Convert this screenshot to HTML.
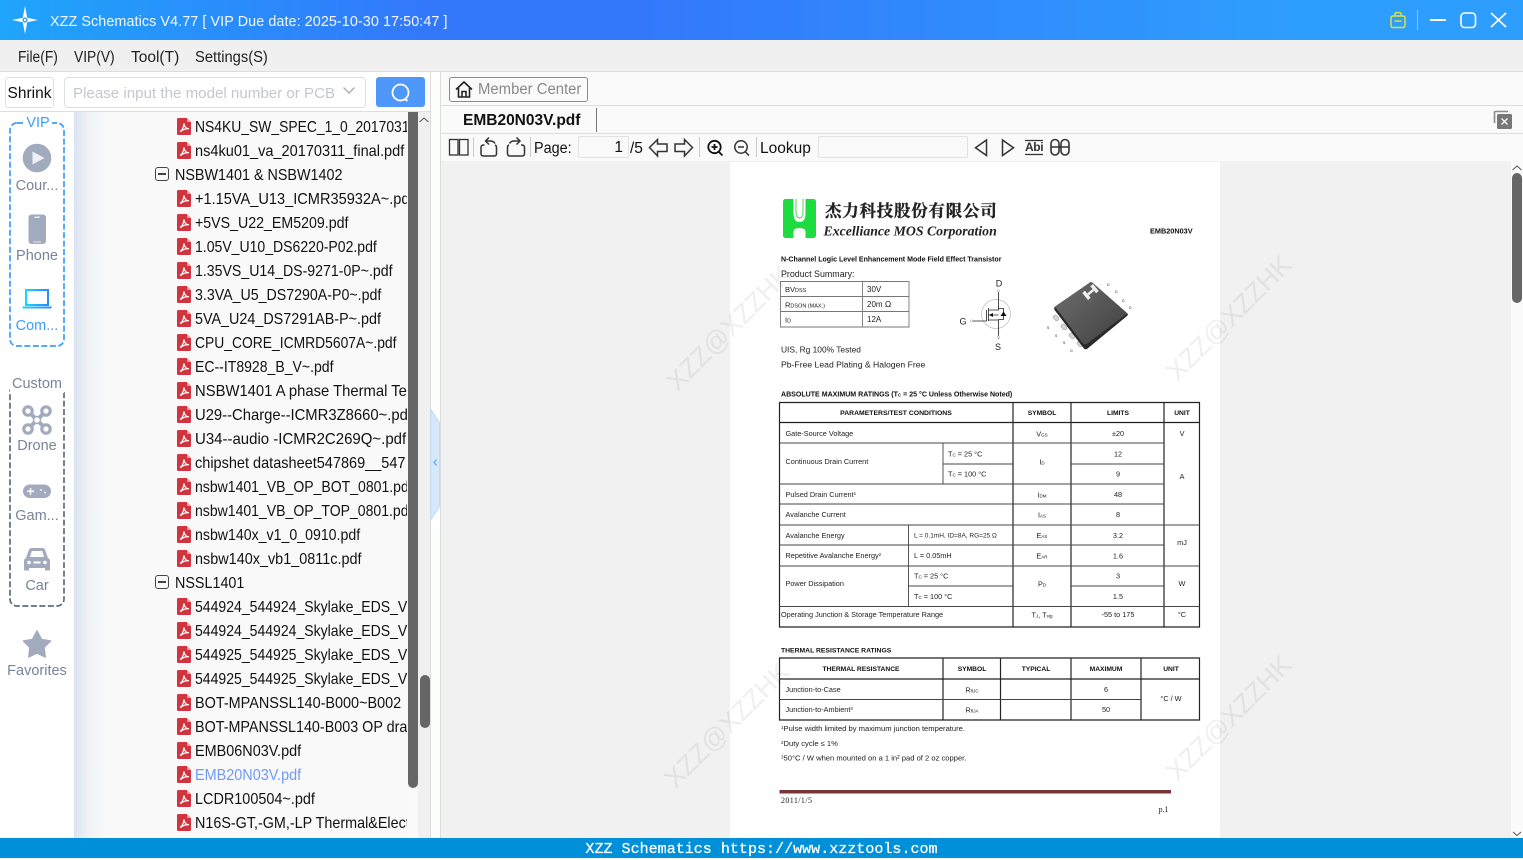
<!DOCTYPE html>
<html><head><meta charset="utf-8"><style>
html,body{margin:0;padding:0;width:1523px;height:858px;overflow:hidden;background:#fafafa;font-family:"Liberation Sans","Noto Sans CJK SC",sans-serif;color:#111}
.a{position:absolute;white-space:nowrap;transform-origin:0 50%}
svg{position:absolute;overflow:visible}
#tree{position:absolute;left:74px;top:112px;width:333px;height:726px;overflow:hidden;background:linear-gradient(90deg,#dbe4f3 0,#f0f2f6 14px,#f9f9f9 32px)}
#treebg{position:absolute;left:407px;top:112px;width:1px;height:726px;background:#f9f9f9}
.r{position:absolute;left:121px;height:24px;line-height:24px;margin-top:2px;font-size:15.6px;white-space:nowrap;color:#111;transform:scaleX(.92);transform-origin:0 50%}
.g{left:101px}
.i{position:absolute;left:103px;width:14px;height:17px}
.b{position:absolute;left:81px;width:12px;height:12px;border:1.3px solid #444;border-radius:3px}
.b:after{content:"";position:absolute;left:2px;right:2px;top:5.3px;height:1.3px;background:#444}
.sl{position:absolute;left:0;width:74px;text-align:center;font-size:14.5px;color:#79839a}
.pg text{font-family:"Liberation Sans",sans-serif;fill:#222;font-size:7.3px}
.pg .bd{font-weight:bold;fill:#111;font-size:6.7px}
.pg .m{text-anchor:middle}
.pg tspan.s{font-size:4.5px}
</style></head><body>

<!-- title bar -->
<div class="a" style="left:0;top:0;width:1523px;height:40px;background:linear-gradient(90deg,#1fa5fb 0,#3378fb 28%,#3378fb 42%,#2e9efe 85%,#2e9efe 100%)"></div>
<svg style="left:0;top:0" width="60" height="40" viewBox="0 0 60 40"><path d="M25 6 L27.2 17.8 L38 20 L27.2 22.2 L25 34 L22.8 22.2 L12 20 L22.8 17.8Z" fill="#fff"/><circle cx="25" cy="20" r="2.6" fill="#3a9cf8"/><circle cx="25" cy="20" r="1.2" fill="#fff"/></svg>
<div class="a" style="left:50px;top:12px;font-size:15px;line-height:19px;color:#f2f7ff;letter-spacing:.08px;transform:scaleX(.957)">XZZ Schematics V4.77 [ VIP Due date: 2025-10-30 17:50:47 ]</div>
<svg style="left:1380px;top:0" width="143" height="40" viewBox="1380 0 143 40" fill="none">
<rect x="1391" y="16" width="14" height="11.5" rx="2" stroke="#d8e23a" stroke-width="1.5"/><path d="M1395 16v-2.2q0-1.2 1.2-1.2h3.6q1.2 0 1.2 1.2V16M1394.5 21h7" stroke="#d8e23a" stroke-width="1.5"/>
<path d="M1417.5 10v20" stroke="#8cc6fb" stroke-width="1"/>
<path d="M1430 20h16" stroke="#fff" stroke-width="2"/>
<rect x="1461" y="13" width="14.5" height="14.5" rx="3.5" stroke="#fff" stroke-width="1.6"/>
<path d="M1491 13l15 14M1506 13l-15 14" stroke="#fff" stroke-width="1.6"/></svg>

<!-- menu -->
<div class="a" style="left:0;top:40px;width:1523px;height:31px;background:#f0f0f0;border-bottom:1px solid #dcdcdc"></div>
<div class="a" style="left:18px;top:49px;font-size:15.5px;line-height:18px;color:#222;transform:scaleX(.89)">File(F)</div>
<div class="a" style="left:74px;top:49px;font-size:15.5px;line-height:18px;color:#222;transform:scaleX(.89)">VIP(V)</div>
<div class="a" style="left:131px;top:49px;font-size:15.5px;line-height:18px;color:#222">Tool(T)</div>
<div class="a" style="left:195px;top:49px;font-size:15.5px;line-height:18px;color:#222;transform:scaleX(.95)">Settings(S)</div>

<!-- search row -->
<div class="a" style="left:0;top:72px;width:431px;height:39px;background:#fff;border-bottom:1px solid #dedede"></div>
<div class="a" style="left:5px;top:77px;width:47px;height:29px;border:1px solid #dcdfe6;border-radius:3px;text-align:center;font-size:15.5px;line-height:31px;color:#111">Shrink</div>
<div class="a" style="left:64px;top:77px;width:300px;height:29px;border:1px solid #dcdfe6;border-radius:4px;background:#fff"></div>
<div class="a" style="left:73px;top:85px;font-size:15.2px;line-height:18px;color:#c4c7ce;transform:scaleX(.995)">Please input the model number or PCB</div>
<svg style="left:342px;top:86px" width="14" height="10"><path d="M1.5 1.5l5.5 5.5 5.500-5.500" fill="none" stroke="#a8abb2" stroke-width="1.4"/></svg>
<div class="a" style="left:376px;top:77px;width:49px;height:30px;background:#4f98fb;border-radius:3px"></div>
<svg style="left:388px;top:81px" width="26" height="24" fill="none"><circle cx="12.5" cy="11.5" r="8" stroke="#fff" stroke-width="1.8"/><path d="M17 18l2.500 2" stroke="#fff" stroke-width="1.8"/></svg>

<!-- left sidebar -->
<div class="a" style="left:0;top:112px;width:74px;height:726px;background:#fff"></div>
<svg style="left:0;top:112px" width="74" height="640" viewBox="0 112 74 640">
<rect x="10" y="123" width="54" height="223" rx="7" fill="none" stroke="#3b9dff" stroke-width="1.7" stroke-dasharray="6 2.500"/>
<rect x="10" y="385" width="54" height="221" rx="7" fill="none" stroke="#636b7d" stroke-width="1.7" stroke-dasharray="6 2.500"/>
</svg>
<div class="a" style="left:24px;top:114px;width:28px;height:18px;background:#fff;text-align:center;font-size:14.5px;line-height:19px;color:#3b9dff">VIP</div>
<div class="a" style="left:10px;top:375px;width:54px;height:18px;background:#fff;text-align:center;font-size:14.5px;line-height:19px;color:#79839a">Custom</div>
<svg style="left:0;top:112px" width="74" height="640" viewBox="0 112 74 640">
<circle cx="37" cy="158" r="14.3" fill="#a2aabd"/><path d="M32.5 151.500l12 6.500-12 6.500z" fill="#eef0f5"/>
<rect x="28.5" y="214.5" width="17.5" height="29.5" rx="3" fill="#a2aabd"/><rect x="34" y="216.5" width="6" height="1.5" rx=".7" fill="#e6e8ee"/><rect x="33" y="241.5" width="8" height="1" fill="#e6e8ee"/>
<defs><linearGradient id="lp" x1="0" x2="1"><stop offset="0" stop-color="#16d6ff"/><stop offset="1" stop-color="#2a8cff"/></linearGradient></defs>
<rect x="26" y="290" width="22" height="15" fill="none" stroke="url(#lp)" stroke-width="2"/><path d="M22 306.5h30l-1 2h-28z" fill="url(#lp)"/>
<g fill="none" stroke="#a2aabd" stroke-width="3.2"><circle cx="28" cy="411" r="4.2"/><circle cx="46" cy="411" r="4.2"/><circle cx="28" cy="429" r="4.2"/><circle cx="46" cy="429" r="4.2"/><path d="M31 414l12 12M43 414l-12 12" stroke-width="4"/></g><circle cx="37" cy="420" r="3.5" fill="#fff" stroke="#a2aabd" stroke-width="1.5"/>
<rect x="23" y="484.5" width="28" height="13.5" rx="6.7" fill="#a2aabd"/><path d="M27 491.300h7M30.500 488v6.700" stroke="#fff" stroke-width="1.5"/><circle cx="41" cy="490" r=".9" fill="#fff"/><circle cx="45" cy="492.5" r=".9" fill="#fff"/>
<path d="M29 549.500q.8-1.500 3-1.500h10q2.200 0 3 1.500l3 8.500q2 1 2 3v9.500h-5v-2.500h-16v2.500h-5V561q0-2 2-3z" fill="#a2aabd"/><path d="M30 557l1.800-6h10.400l1.800 6z" fill="#fff"/><circle cx="29" cy="562.500" r="1.800" fill="#fff"/><circle cx="45" cy="562.500" r="1.800" fill="#fff"/><rect x="33.500" y="561.500" width="7" height="2" fill="#fff"/>
<path d="M37 631l4.500 8.500 9 1.500-6.500 6.500 1.200 9.500-8.200-4-8.200 4 1.200-9.500-6.500-6.500 9-1.500z" fill="#a2aabd" stroke="#a2aabd" stroke-width="1.5" stroke-linejoin="round"/>
</svg>
<div class="sl" style="top:178px">Cour...</div>
<div class="sl" style="top:248px">Phone</div>
<div class="sl" style="top:318px;color:#3b9dff">Com...</div>
<div class="sl" style="top:438px">Drone</div>
<div class="sl" style="top:508px">Gam...</div>
<div class="sl" style="top:578px">Car</div>
<div class="sl" style="top:663px">Favorites</div>

<!-- tree -->
<svg width="0" height="0" style="left:0;top:0"><defs><symbol id="pdf" viewBox="0 0 14 17"><path d="M1.5 0H10l4 4v11.500q0 1.500-1.500 1.500h-11Q0 17 0 15.500v-14Q0 0 1.500 0z" fill="#d1343e"/><path d="M10 0v4h4z" fill="#f0a0a5"/><path d="M3 13.500c2-1 3.500-4 4-8 .3 3 2 5 5 5.300-3-.3-6 .5-8.500 2.700z" fill="none" stroke="#fff" stroke-width="1.2"/></symbol></defs></svg>
<div id="tree">
<svg class="i" style="top:6px"><use href="#pdf"/></svg><div class="r" style="top:2px;transform:scaleX(.89)">NS4KU_SW_SPEC_1_0_20170317</div>
<svg class="i" style="top:30px"><use href="#pdf"/></svg><div class="r" style="top:26px;transform:scaleX(.933)">ns4ku01_va_20170311_final.pdf</div>
<div class="b" style="top:55px"></div><div class="r g" style="top:50px">NSBW1401 &amp; NSBW1402</div>
<svg class="i" style="top:78px"><use href="#pdf"/></svg><div class="r" style="top:74px;transform:scaleX(.935)">+1.15VA_U13_ICMR35932A~.pdf</div>
<svg class="i" style="top:102px"><use href="#pdf"/></svg><div class="r" style="top:98px;transform:scaleX(.91)">+5VS_U22_EM5209.pdf</div>
<svg class="i" style="top:126px"><use href="#pdf"/></svg><div class="r" style="top:122px;transform:scaleX(.9)">1.05V_U10_DS6220-P02.pdf</div>
<svg class="i" style="top:150px"><use href="#pdf"/></svg><div class="r" style="top:146px;transform:scaleX(.906)">1.35VS_U14_DS-9271-0P~.pdf</div>
<svg class="i" style="top:174px"><use href="#pdf"/></svg><div class="r" style="top:170px;transform:scaleX(.91)">3.3VA_U5_DS7290A-P0~.pdf</div>
<svg class="i" style="top:198px"><use href="#pdf"/></svg><div class="r" style="top:194px">5VA_U24_DS7291AB-P~.pdf</div>
<svg class="i" style="top:222px"><use href="#pdf"/></svg><div class="r" style="top:218px;transform:scaleX(.889)">CPU_CORE_ICMRD5607A~.pdf</div>
<svg class="i" style="top:246px"><use href="#pdf"/></svg><div class="r" style="top:242px;transform:scaleX(.9)">EC--IT8928_B_V~.pdf</div>
<svg class="i" style="top:270px"><use href="#pdf"/></svg><div class="r" style="top:266px;transform:scaleX(.95)">NSBW1401 A phase Thermal Test</div>
<svg class="i" style="top:294px"><use href="#pdf"/></svg><div class="r" style="top:290px;transform:scaleX(.95)">U29--Charge--ICMR3Z8660~.pdf</div>
<svg class="i" style="top:318px"><use href="#pdf"/></svg><div class="r" style="top:314px;transform:scaleX(.961)">U34--audio -ICMR2C269Q~.pdf</div>
<svg class="i" style="top:342px"><use href="#pdf"/></svg><div class="r" style="top:338px;transform:scaleX(.93)">chipshet datasheet547869__547</div>
<svg class="i" style="top:366px"><use href="#pdf"/></svg><div class="r" style="top:362px;transform:scaleX(.9)">nsbw1401_VB_OP_BOT_0801.pdf</div>
<svg class="i" style="top:390px"><use href="#pdf"/></svg><div class="r" style="top:386px;transform:scaleX(.9)">nsbw1401_VB_OP_TOP_0801.pdf</div>
<svg class="i" style="top:414px"><use href="#pdf"/></svg><div class="r" style="top:410px;transform:scaleX(.907)">nsbw140x_v1_0_0910.pdf</div>
<svg class="i" style="top:438px"><use href="#pdf"/></svg><div class="r" style="top:434px;transform:scaleX(.925)">nsbw140x_vb1_0811c.pdf</div>
<div class="b" style="top:463px"></div><div class="r g" style="top:458px">NSSL1401</div>
<svg class="i" style="top:486px"><use href="#pdf"/></svg><div class="r" style="top:482px;transform:scaleX(.9)">544924_544924_Skylake_EDS_Vol</div>
<svg class="i" style="top:510px"><use href="#pdf"/></svg><div class="r" style="top:506px;transform:scaleX(.9)">544924_544924_Skylake_EDS_Vol</div>
<svg class="i" style="top:534px"><use href="#pdf"/></svg><div class="r" style="top:530px;transform:scaleX(.9)">544925_544925_Skylake_EDS_Vol</div>
<svg class="i" style="top:558px"><use href="#pdf"/></svg><div class="r" style="top:554px;transform:scaleX(.9)">544925_544925_Skylake_EDS_Vol</div>
<svg class="i" style="top:582px"><use href="#pdf"/></svg><div class="r" style="top:578px;transform:scaleX(.925)">BOT-MPANSSL140-B000~B002</div>
<svg class="i" style="top:606px"><use href="#pdf"/></svg><div class="r" style="top:602px">BOT-MPANSSL140-B003 OP drawing</div>
<svg class="i" style="top:630px"><use href="#pdf"/></svg><div class="r" style="top:626px;transform:scaleX(.925)">EMB06N03V.pdf</div>
<svg class="i" style="top:654px"><use href="#pdf"/></svg><div class="r" style="top:650px;color:#6f9bf4;transform:scaleX(.925)">EMB20N03V.pdf</div>
<svg class="i" style="top:678px"><use href="#pdf"/></svg><div class="r" style="top:674px;transform:scaleX(.925)">LCDR100504~.pdf</div>
<svg class="i" style="top:702px"><use href="#pdf"/></svg><div class="r" style="top:698px">N16S-GT,-GM,-LP Thermal&amp;Electrical</div>
</div>
<div id="treebg"></div>
<!-- tree scrollbars -->
<div class="a" style="left:408px;top:112px;width:10px;height:676px;background:#666;border-radius:0 0 5px 5px"></div>
<div class="a" style="left:408px;top:788px;width:10px;height:50px;background:#f9f9f9;z-index:-1"></div>
<div class="a" style="left:418px;top:112px;width:12px;height:726px;background:#f0f0f0"></div>
<svg style="left:418px;top:114px" width="12" height="12"><path d="M1.5 8l4.500-4 4.500 4" fill="none" stroke="#555" stroke-width="1"/></svg>
<div class="a" style="left:420px;top:675px;width:10px;height:53px;background:#666;border-radius:5px"></div>
<div class="a" style="left:430px;top:72px;width:1px;height:766px;background:#dcdcdc"></div>
<div class="a" style="left:431px;top:72px;width:9px;height:766px;background:#fdfffd"></div>
<div class="a" style="left:440px;top:72px;width:1px;height:766px;background:#dcdcdc"></div>
<svg style="left:430px;top:405px" width="12" height="120"><path d="M1 4.500l8.500 13.500v83.500L1 114.500z" fill="#d5e8fc" stroke="#b9dcff"/><path d="M6.500 54.500l-2.500 3 2.500 3" fill="none" stroke="#55a5f5" stroke-width="1.2"/></svg>

<!-- right headers -->
<div class="a" style="left:441px;top:72px;width:1082px;height:33px;background:#fafafa;border-bottom:1px solid #dcdcdc"></div>
<div class="a" style="left:441px;top:106px;width:1082px;height:27px;background:#fafafa;border-bottom:1px solid #dcdcdc"></div>
<div class="a" style="left:441px;top:134px;width:1082px;height:27px;background:#fafafa"></div>
<div class="a" style="left:441px;top:161px;width:1070px;height:677px;background:#f1f1f1"></div>
<div class="a" style="left:1511px;top:161px;width:12px;height:677px;background:#fafafa"></div>
<div class="a" style="left:449px;top:77px;width:137px;height:23px;border:1px solid #8a8a8a;border-radius:3px"></div>
<svg style="left:454px;top:79px" width="20" height="20" fill="none" stroke="#222" stroke-width="1.6"><path d="M2 10.500L10 3l8 7.500M4.500 9v9h11V9M8 18v-5.500h4V18"/></svg>
<div class="a" style="left:477.5px;top:80px;font-size:15.5px;line-height:19px;color:#8a8a8a;transform:scaleX(.96)">Member Center</div>
<div class="a" style="left:463px;top:111px;font-size:15.5px;line-height:19px;font-weight:bold;color:#111">EMB20N03V.pdf</div>
<div class="a" style="left:596px;top:108px;width:1px;height:24px;background:#777"></div>
<svg style="left:1490px;top:106px" width="26" height="26"><path d="M4.500 17V6.500q0-1 1-1H18" fill="none" stroke="#8a8a8a" stroke-width="1.6"/><rect x="7" y="8" width="15" height="15" rx="1.500" fill="#777"/><path d="M11.500 12.500l6 6M17.500 12.500l-6 6" stroke="#fff" stroke-width="1.3"/></svg>

<!-- toolbar -->
<svg style="left:441px;top:134px" width="640" height="27" viewBox="441 134 640 27" fill="none" stroke="#333" stroke-width="1.3">
<rect x="449.5" y="139.5" width="8.500" height="15.500"/><rect x="459.5" y="139.5" width="8.500" height="15.500"/>
<path d="M473.5 137v20M530.5 137v20M699.5 137v20M756.5 137v20" stroke="#ccc" stroke-width="1"/>
<path d="M484.5 145h-1q-2.500 0-2.500 2.500v6q0 2.500 2.500 2.500h10.500q2.500 0 2.500-2.500v-6q0-2-1.500-2.500M495 143.500q-1.500-2.500-4.500-2.500h-4.500M489 137.500l-3.500 3.500 3.500 3.500" stroke-width="1.5"/>
<path d="M521 145h1q2.500 0 2.500 2.500v6q0 2.500-2.500 2.500h-12q-2.500 0-2.500-2.500v-6q0-2 1.500-2.500M509.500 143.500q1.500-2.500 4.500-2.500h6M516.500 137.500l3.500 3.500-3.500 3.500" stroke-width="1.500"/>
<path d="M649.5 147.500l8-8v4.500h9.500v7.500h-9.500v4.500z" stroke-width="1.5"/>
<path d="M692.500 147.500l-8-8v4.500h-9.500v7.500h9.500v4.500z" stroke-width="1.5"/>
<g stroke="#111" stroke-width="1.8"><circle cx="714.5" cy="147" r="6.2"/><path d="M719 152l3.500 3.500M711.500 147h6M714.500 144v6"/></g>
<g stroke="#333" stroke-width="1.5"><circle cx="741" cy="147" r="6.2"/><path d="M745.500 152l3.500 3.500M738 147h6"/></g>
<path d="M986.500 140v15.500l-11-7.700zM1002.500 140v15.500l11-7.700z" stroke-width="1.5"/>
<path d="M1025 140.500h18M1025 154.500h18" stroke-width="1.2"/>
<g stroke-width="1.6"><rect x="1051" y="139.500" width="8" height="15.500" rx="4"/><rect x="1061" y="139.500" width="8" height="15.500" rx="4"/><path d="M1051 147h18"/></g>
</svg>
<div class="a" style="left:534px;top:139px;font-size:15.5px;line-height:19px;color:#111;transform:scaleX(.93)">Page:</div>
<div class="a" style="left:578px;top:136px;width:44px;height:20px;border:1px solid #e2e2e2;border-radius:2px;padding-right:5px;text-align:right;font-size:15.5px;line-height:22px;color:#111">1</div>
<div class="a" style="left:630px;top:139px;font-size:15.5px;line-height:19px;color:#111">/5</div>
<div class="a" style="left:760px;top:139px;font-size:15.5px;line-height:19px;color:#111">Lookup</div>
<div class="a" style="left:818px;top:136px;width:148px;height:20px;border:1px solid #e2e2e2;border-radius:2px"></div>
<div class="a" style="left:1025px;top:140px;font-size:12px;line-height:14px;font-weight:bold;color:#333;letter-spacing:-.4px">Abi</div>

<!-- right scrollbar -->
<svg style="left:1511px;top:163px" width="12" height="10"><path d="M1.5 7l4.500-4 4.500 4" fill="none" stroke="#555"/></svg>
<div class="a" style="left:1512px;top:173px;width:10px;height:130px;background:#666;border-radius:5px"></div>
<svg style="left:1511px;top:830px" width="12" height="8"><path d="M2 2l4 3.500 4-3.500" fill="none" stroke="#555"/></svg>

<!-- pdf page -->
<div class="a" style="left:730px;top:162px;width:490px;height:676px;background:#fff"></div>
<svg class="pg" style="left:0;top:0" width="1523" height="858" viewBox="0 0 1523 858">
<defs><linearGradient id="chip" x1="0" y1="0" x2="1" y2="1"><stop offset="0" stop-color="#6e6e6e"/><stop offset="1" stop-color="#3e3e3e"/></linearGradient><filter id="bl"><feGaussianBlur stdDeviation=".25"/></filter></defs>
<g filter="url(#bl)">
<!-- logo -->
<rect x="783" y="199" width="33" height="39" rx="2.5" fill="#1fdc3f"/>
<path d="M793.5 199v14q0 9 6 9t6-9v-14z" fill="#fff"/><path d="M796 199v12q0 7 3.500 7t3.500-7v-12" fill="none" stroke="#6fd884" stroke-width="1.2"/>
<path d="M793.5 238v-6q0-4 6-4t6 4v6z" fill="#fff"/>
<text x="825" y="216.500" style="font-family:'Noto Serif CJK SC',serif;font-size:16.5px;font-weight:bold;letter-spacing:.75px;fill:#222;stroke:#222;stroke-width:.35px">杰力科技股份有限公司</text>
<text x="823.5" y="235.5" style="font-family:'Liberation Serif',serif;font-size:13.8px;font-weight:bold;font-style:italic;fill:#222">Excelliance MOS Corporation</text>
<text x="1150" y="233.5" class="bd" style="font-size:7.3px">EMB20N03V</text>
<text x="781" y="261.5" class="bd" style="font-size:7.05px">N-Channel Logic Level Enhancement Mode Field Effect Transistor</text>
<text x="781" y="277" style="font-size:8.9px">Product Summary:</text>
<!-- summary table -->
<path d="M780.500 281.500h128.500v45.500h-128.500zM862.500 281.500v45.500M780.500 296.500h128.500M780.500 311.500h128.500" fill="none" stroke="#777" stroke-width=".9"/>
<text x="785" y="292" style="font-size:7.5px">BV<tspan style="font-size:5.5px">DSS</tspan></text>
<text x="867" y="292" style="font-size:8px">30V</text>
<text x="785" y="307.5" style="font-size:7.5px">R<tspan style="font-size:5.5px">DSON (MAX.)</tspan></text>
<text x="867" y="307" style="font-size:8px">20m<tspan style="font-size:8.5px"> Ω</tspan></text>
<text x="785" y="322.5" style="font-size:7.5px">I<tspan style="font-size:5.5px">D</tspan></text>
<text x="867" y="322" style="font-size:8px">12A</text>
<text x="781" y="352.5" style="font-size:8.4px">UIS, Rg 100% Tested</text>
<text x="781" y="367.5" style="font-size:8.65px">Pb-Free Lead Plating &amp; Halogen Free</text>
<!-- mosfet -->
<text x="999" y="286.5" class="m" style="font-size:9px">D</text>
<text x="963" y="324.5" class="m" style="font-size:9px">G</text>
<text x="998" y="350" class="m" style="font-size:9px">S</text>
<circle cx="996" cy="314" r="14.5" fill="none" stroke="#bbb" stroke-width=".7"/>
<g fill="none" stroke="#222" stroke-width=".8"><path d="M972 321h14.500v-11M988.500 308v13M988.500 310h10v-19M988.500 320h10v19M998.500 308.500h5v11h-5M988.500 315h10"/></g>
<path d="M989 315l4-2v4zM1000.500 316h6l-3-4.500z" fill="#111"/>
<circle cx="998.5" cy="291" r="1.2" fill="#fff" stroke="#999" stroke-width=".5"/><circle cx="998.5" cy="337" r="1.2" fill="#fff" stroke="#999" stroke-width=".5"/><circle cx="971.5" cy="321" r="1.2" fill="#fff" stroke="#999" stroke-width=".5"/>
<!-- chip -->
<g fill="#d8d8d8" stroke="#999" stroke-width=".5"><rect x="1053" y="316" width="6" height="4" rx="1.5" transform="rotate(45 1056 318)"/><rect x="1061" y="325" width="6" height="4" rx="1.5" transform="rotate(45 1064 327)"/><rect x="1069" y="334" width="6" height="4" rx="1.5" transform="rotate(45 1072 336)"/><rect x="1077" y="342" width="6" height="4" rx="1.5" transform="rotate(45 1080 344)"/></g>
<path d="M1089 283q2-2 4 0l33.500 29.500q2 2 0 3.500L1087 348.500q-2 1.500-3.500-.5l-29-38q-1.500-2 .5-3.500z" fill="url(#chip)"/>
<path d="M1054.500 309.500l29.500 39q1.500 1.500 3 .5l40-33q1.500-1.500 .5-2.500l-41 30.500q-2 1-3.500-.5l-27.500-36z" fill="#2a2a2a"/>
<g fill="#f0f0f0" transform="rotate(-40 1090.500 292)"><rect x="1083.5" y="287.5" width="3.5" height="9"/><rect x="1094" y="287.5" width="3.5" height="9"/><rect x="1087" y="291" width="7" height="2.5"/></g>
<g fill="#888"><text x="1107" y="286" style="font-size:3.5px">D</text><text x="1115" y="293" style="font-size:3.5px">D</text><text x="1122" y="302" style="font-size:3.5px">D</text><text x="1129" y="309" style="font-size:3.5px">D</text><text x="1047" y="329" style="font-size:3.5px">S</text><text x="1055" y="337" style="font-size:3.5px">S</text><text x="1063" y="344" style="font-size:3.5px">S</text><text x="1070" y="352" style="font-size:3.5px">G</text></g>

<!-- abs max table -->
<text x="781" y="396.5" class="bd" style="font-size:7.05px">ABSOLUTE MAXIMUM RATINGS (T<tspan class="s">C</tspan> = 25 °C Unless Otherwise Noted)</text>
<path d="M779.500 402.500h420v224.500h-420zM779.500 422.500h420M1013 402.500V627M1071 402.500V627M1164 402.500V627" fill="none" stroke="#222" stroke-width="1.2"/>
<path d="M779.500 443h384.500M943 464h70M1071 464h93M779.500 484h384.500M779.500 504h384.500M779.500 525h420M779.500 545h384.500M779.500 566h420M908.500 586h104.500M1071 586h93M779.500 606.500h420M943 443v41M908.500 525v81" fill="none" stroke="#444" stroke-width=".9"/>
<text x="896" y="415" class="bd m" style="font-size:6.85px">PARAMETERS/TEST CONDITIONS</text>
<text x="1042" y="415" class="bd m">SYMBOL</text><text x="1118" y="415" class="bd m">LIMITS</text><text x="1182" y="415" class="bd m">UNIT</text>
<text x="785.5" y="436">Gate-Source Voltage</text><text x="1042" y="436.500" class="m">V<tspan class="s">GS</tspan></text><text x="1118" y="436" class="m">±20</text><text x="1182" y="436" class="m">V</text>
<text x="785.5" y="464">Continuous Drain Current</text><text x="948" y="456.5">T<tspan class="s">C</tspan> = 25 °C</text><text x="948" y="476.5">T<tspan class="s">C</tspan> = 100 °C</text><text x="1042" y="464.5" class="m">I<tspan class="s">D</tspan></text><text x="1118" y="456.5" class="m">12</text><text x="1118" y="476.5" class="m">9</text><text x="1182" y="479" class="m">A</text>
<text x="785.5" y="497">Pulsed Drain Current<tspan dy="-2" class="s">1</tspan></text><text x="1042" y="497.5" class="m">I<tspan class="s">DM</tspan></text><text x="1118" y="497" class="m">48</text>
<text x="785.5" y="517">Avalanche Current</text><text x="1042" y="517.5" class="m">I<tspan class="s">AS</tspan></text><text x="1118" y="517" class="m">8</text>
<text x="785.5" y="538">Avalanche Energy</text><text x="914" y="537.5" style="font-size:6.5px">L = 0.1mH, ID=8A, RG=25 Ω</text><text x="1042" y="538" class="m">E<tspan class="s">AS</tspan></text><text x="1118" y="538" class="m">3.2</text><text x="1182" y="545" class="m">mJ</text>
<text x="785.5" y="558">Repetitive Avalanche Energy<tspan dy="-2" class="s">2</tspan></text><text x="914" y="558">L = 0.05mH</text><text x="1042" y="558.5" class="m">E<tspan class="s">AR</tspan></text><text x="1118" y="558.5" class="m">1.6</text>
<text x="785.5" y="586">Power Dissipation</text><text x="914" y="578.5">T<tspan class="s">C</tspan> = 25 °C</text><text x="914" y="599">T<tspan class="s">C</tspan> = 100 °C</text><text x="1042" y="586.5" class="m">P<tspan class="s">D</tspan></text><text x="1118" y="578.5" class="m">3</text><text x="1118" y="599" class="m">1.5</text><text x="1182" y="586" class="m">W</text>
<text x="781" y="617">Operating Junction &amp; Storage Temperature Range</text><text x="1042" y="617.5" class="m">T<tspan class="s">J</tspan>, T<tspan class="s">stg</tspan></text><text x="1118" y="617" class="m">-55 to 175</text><text x="1182" y="617" class="m">°C</text>

<!-- thermal table -->
<text x="781" y="652.5" class="bd" style="font-size:6.8px">THERMAL RESISTANCE RATINGS</text>
<path d="M779.500 658h420v62h-420zM779.500 679h420M943 658v62M1000.500 658v62M1071 658v62M1141 658v62" fill="none" stroke="#222" stroke-width="1.2"/>
<path d="M779.500 699.500h361.500" fill="none" stroke="#444" stroke-width=".9"/>
<text x="861" y="671" class="bd m">THERMAL RESISTANCE</text><text x="972" y="671" class="bd m">SYMBOL</text><text x="1036" y="671" class="bd m">TYPICAL</text><text x="1106" y="671" class="bd m">MAXIMUM</text><text x="1171" y="671" class="bd m">UNIT</text>
<text x="785.5" y="692">Junction-to-Case</text><text x="972" y="692.5" class="m">R<tspan class="s">θJC</tspan></text><text x="1106" y="692" class="m">6</text><text x="1171" y="701" class="m">°C / W</text>
<text x="785.5" y="712">Junction-to-Ambient<tspan dy="-2" class="s">3</tspan></text><text x="972" y="712.5" class="m">R<tspan class="s">θJA</tspan></text><text x="1106" y="712" class="m">50</text>
<text x="781" y="731" style="font-size:7.6px"><tspan dy="-2" class="s">1</tspan><tspan dy="2">Pulse width limited by maximum junction temperature.</tspan></text>
<text x="781" y="746" style="font-size:7.6px"><tspan dy="-2" class="s">2</tspan><tspan dy="2">Duty cycle ≤ 1%</tspan></text>
<text x="781" y="760.5" style="font-size:7.6px"><tspan dy="-2" class="s">3</tspan><tspan dy="2">50°C / W when mounted on a 1 in² pad of 2 oz copper.</tspan></text>
<rect x="779.5" y="790" width="391.5" height="3.5" fill="#7a3535"/>
<text x="781" y="803" style="font-family:'Liberation Serif',serif;font-size:8px;letter-spacing:.4px">2011/1/5</text>
<text x="1158.5" y="812" style="font-family:'Liberation Serif',serif;font-size:8px">p.1</text>
</g>
<!-- watermarks -->
<g style="font-family:'Liberation Sans',sans-serif" opacity=".065">
<text transform="translate(729,328) rotate(-45)" text-anchor="middle" dy="9" style="font-size:26.5px;fill:#000">XZZ@XZZHK</text>
<text transform="translate(1229,318) rotate(-45)" text-anchor="middle" dy="9" style="font-size:26.5px;fill:#000">XZZ@XZZHK</text>
<text transform="translate(727,725) rotate(-45)" text-anchor="middle" dy="9" style="font-size:26.5px;fill:#000">XZZ@XZZHK</text>
<text transform="translate(1229,718) rotate(-45)" text-anchor="middle" dy="9" style="font-size:26.5px;fill:#000">XZZ@XZZHK</text>
</g>
</svg>

<!-- footer -->
<div class="a" style="left:0;top:838px;width:1523px;height:20px;background:#0090d9;text-align:center;font-family:'Liberation Mono',monospace;font-size:15.05px;line-height:22px;color:#fff;-webkit-text-stroke:.25px #fff">XZZ Schematics https://www.xzztools.com</div>
</body></html>
